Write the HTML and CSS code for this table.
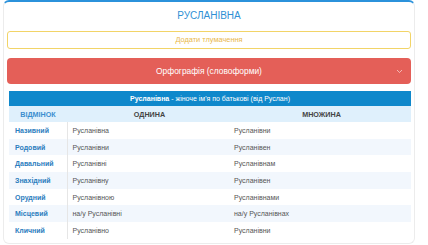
FILE: index.html
```html
<!DOCTYPE html>
<html lang="uk">
<head>
<meta charset="utf-8">
<title>Русланівна</title>
<link rel="stylesheet" href="styles.css">
</head>
<body>
<div class="card">
  <h1 class="title">РУСЛАНІВНА</h1>
  <div class="meaning">Додати тлумачення</div>
  <div class="spell">
    <span>Орфографія (словоформи)</span>
    <svg class="chev" width="7" height="5" viewBox="0 0 7 5"><path d="M1 1 L3.5 3.5 L6 1" fill="none" stroke="currentColor" stroke-width="1"/></svg>
  </div>
  <table class="forms">
    <colgroup><col class="w1"><col class="w2"><col class="w3"></colgroup>
    <thead>
      <tr class="cap"><th colspan="3"><b>Русланівна</b> - жіноче ім'я по батькові (від Руслан)</th></tr>
      <tr class="heads"><th class="c1">ВІДМІНОК</th><th>ОДНИНА</th><th>МНОЖИНА</th></tr>
    </thead>
    <tbody>
      <tr><td class="c1">Називний</td><td>Русланівна</td><td>Русланівни</td></tr>
      <tr><td class="c1">Родовий</td><td>Русланівни</td><td>Русланівен</td></tr>
      <tr><td class="c1">Давальний</td><td>Русланівні</td><td>Русланівнам</td></tr>
      <tr><td class="c1">Знахідний</td><td>Русланівну</td><td>Русланівен</td></tr>
      <tr><td class="c1">Орудний</td><td>Русланівною</td><td>Русланівнами</td></tr>
      <tr><td class="c1">Місцевий</td><td>на/у Русланівні</td><td>на/у Русланівнах</td></tr>
      <tr><td class="c1">Кличний</td><td>Русланівно</td><td>Русланівни</td></tr>
    </tbody>
  </table>
</div>
</body>
</html>
```
FILE: styles.css
```css
html, body {
  margin: 0;
  padding: 0;
  background: #fff;
  font-family: "Liberation Sans", Arial, sans-serif;
}
.card {
  margin-left: 3px;
  width: 404px;
  padding: 0 3px 4px;
  border: 1px solid #ececec;
  border-top: 2px solid #2b92db;
  border-radius: 6px;
}
.title {
  margin: 0;
  height: 29px;
  line-height: 28px;
  text-align: center;
  font-size: 10px;
  font-weight: normal;
  color: #2f8fd4;
}
.meaning {
  height: 16px;
  line-height: 16px;
  border: 1px solid #f2d467;
  border-radius: 3px;
  text-align: center;
  font-size: 7.4px;
  color: #e9b84c;
}
.spell {
  margin-top: 9px;
  height: 26px;
  background: #e45f58;
  border-radius: 4px;
  display: flex;
  align-items: center;
  justify-content: center;
  position: relative;
  color: #fff;
  font-size: 8.4px;
}
.chev {
  position: absolute;
  right: 8px;
  top: 11px;
  color: rgba(255,255,255,0.55);
}
.forms {
  margin: 7px 2px 0;
  width: 402px;
  border-collapse: collapse;
  font-size: 7px;
  table-layout: fixed;
}
.w1 { width: 58px; }
.w2 { width: 165px; }
.w3 { width: 179px; }
.forms th {
  padding: 0;
}
.cap th {
  height: 15px;
  background: #0f88cb;
  color: #fff;
  font-weight: normal;
  text-align: center;
}
.cap b { font-weight: bold; }
.heads th {
  height: 16px;
  background: #dff0fc;
  color: #444;
  font-weight: bold;
  text-align: center;
  font-size: 7.2px;
}
.heads th.c1 {
  color: #3b8ed0;
}
.forms tbody tr { height: 16.7px; }
.forms tbody tr:nth-child(even) { background: #f2f7fd; }
.forms tbody td {
  padding: 0 0 0 5px;
  color: #555;
}
.forms tbody td.c1 {
  color: #2b7dbe;
  font-weight: bold;
  padding-left: 6px;
  border-right: 1px solid #e6e6e6;
}
.forms tbody td:nth-child(3) { padding-left: 2px; }
```
